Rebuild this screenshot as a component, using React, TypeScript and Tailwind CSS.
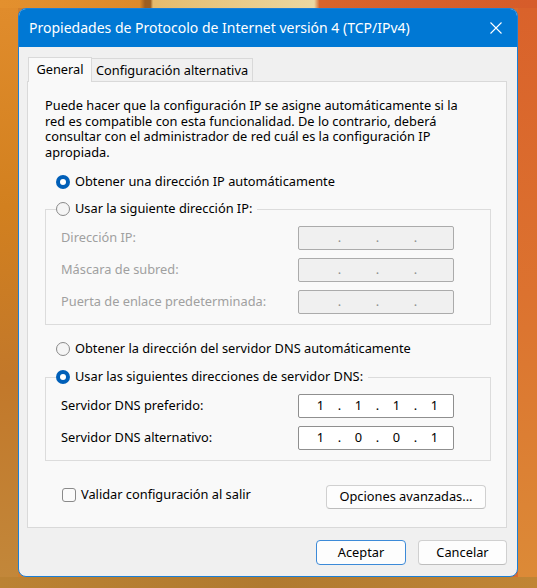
import React from "react";

type RadioProps = { checked?: boolean };

function Radio({ checked }: RadioProps) {
  if (checked) {
    return (
      <span className="flex h-[14px] w-[14px] shrink-0 items-center justify-center rounded-full bg-[#005fb8]">
        <span className="h-[6px] w-[6px] rounded-full bg-white" />
      </span>
    );
  }
  return <span className="h-[14px] w-[14px] shrink-0 rounded-full border border-[#8a8a8a] bg-[#f5f5f5]" />;
}

function IpBox({ value, disabled }: { value?: string[]; disabled?: boolean }) {
  const parts = value ?? ["", "", "", ""];
  return (
    <div
      className={
        disabled
          ? "flex h-[24px] w-[156px] items-center rounded-[2px] border border-[#ababab] bg-[#f0f0f0] pl-[12px] text-[#8f8f8f]"
          : "flex h-[24px] w-[156px] items-center rounded-[2px] border border-[#8f8f8f] bg-white pl-[12px] text-black"
      }
    >
      {parts.map((p, i) => (
        <React.Fragment key={i}>
          <span className="w-[19px] text-center">{p}</span>
          {i < 3 && <span className="w-[19px] text-center">.</span>}
        </React.Fragment>
      ))}
    </div>
  );
}

function FieldRow({ label, children, disabled }: { label: string; children: React.ReactNode; disabled?: boolean }) {
  return (
    <div className="flex h-[24px] items-center pl-[15px] pr-[36px]">
      <span className={disabled ? "flex-1 text-[#a0a0a0]" : "flex-1 text-black"}>{label}</span>
      {children}
    </div>
  );
}

export default function App() {
  return (
    <div className="flex h-[588px] w-[537px] flex-col overflow-hidden font-['Noto_Sans',sans-serif] text-[12.8px] leading-[15.5px] text-black">
      {/* wallpaper top strip */}
      <div className="h-[8px] shrink-0 bg-[linear-gradient(90deg,#e3902e_0%,#de8a2a_26%,#9c5e22_27%,#9c5e22_28%,#e6bb6c_28.5%,#ecd8a2_58.5%,#d8642c_59.5%,#d65c2a_100%)]" />

      <div className="flex h-[569px] shrink-0 bg-[linear-gradient(90deg,#d07e2c_0px,#d07e2c_30px,#d86a2c_500px,#d86a2c_537px)]">
        <div className="w-[18px] shrink-0 bg-[linear-gradient(180deg,#e08c2c_0%,#d2801f_35%,#c2782a_65%,#c2873a_100%)]" />

        {/* window */}
        <div className="flex h-[569px] w-[500px] shrink-0 flex-col overflow-hidden rounded-[8px] border border-[#1b7fd6] bg-[#f0f0f0]">
          <div className="flex h-[38px] shrink-0 items-center justify-between bg-[#0078d4] pl-[10px] pr-[15px] text-white">
            <span className="text-[14px]">Propiedades de Protocolo de Internet versión 4 (TCP/IPv4)</span>
            <svg width="12" height="12" viewBox="0 0 12 12" fill="none" stroke="white" strokeWidth="1.1">
              <path d="M0.5 0.5L11.5 11.5M11.5 0.5L0.5 11.5" />
            </svg>
          </div>

          <div className="flex flex-1 flex-col pl-[8px] pr-[10px] pt-[10px]">
            {/* tabs */}
            <div className="flex h-[24px] items-end pl-[1px]">
              <div className="relative z-10 -mb-px flex h-[25px] w-[64px] items-center justify-center border border-b-0 border-[#d9d9d9] bg-[#f9f9f9]">
                General
              </div>
              <div className="flex h-[23px] w-[161px] items-center justify-center border border-l-0 border-b-0 border-[#d9d9d9] bg-[#f0f0f0] pt-[2px]">
                Configuración alternativa
              </div>
            </div>

            {/* panel */}
            <div className="flex h-[447px] w-[480px] flex-col border border-[#d9d9d9] bg-[#f9f9f9] pl-[17px] pr-[15px] pt-[16px]">
              <p>
                Puede hacer que la configuración IP se asigne automáticamente si la
                <br />
                red es compatible con esta funcionalidad. De lo contrario, deberá
                <br />
                consultar con el administrador de red cuál es la configuración IP
                <br />
                apropiada.
              </p>

              <label className="mt-[13px] flex h-[18px] items-center gap-[5px] pl-[11px]">
                <Radio checked />
                <span>Obtener una dirección IP automáticamente</span>
              </label>

              <fieldset className="mt-[9px] h-[125px] border border-[#dcdcdc] pb-[9px] pt-[8px]">
                <legend className="ml-[10px] flex h-[18px] items-center gap-[5px] pl-0 pr-[5px]">
                  <Radio />
                  <span>Usar la siguiente dirección IP:</span>
                </legend>
                <div className="flex flex-col gap-[8px]">
                  <FieldRow label="Dirección IP:" disabled>
                    <IpBox disabled />
                  </FieldRow>
                  <FieldRow label="Máscara de subred:" disabled>
                    <IpBox disabled />
                  </FieldRow>
                  <FieldRow label="Puerta de enlace predeterminada:" disabled>
                    <IpBox disabled />
                  </FieldRow>
                </div>
              </fieldset>

              <label className="mt-[15px] flex h-[18px] items-center gap-[5px] pl-[11px]">
                <Radio />
                <span>Obtener la dirección del servidor DNS automáticamente</span>
              </label>

              <fieldset className="mt-[10px] h-[93px] border border-[#dcdcdc] pt-[8px]">
                <legend className="ml-[10px] flex h-[18px] items-center gap-[5px] pl-0 pr-[5px]">
                  <Radio checked />
                  <span>Usar las siguientes direcciones de servidor DNS:</span>
                </legend>
                <div className="flex flex-col gap-[8px]">
                  <FieldRow label="Servidor DNS preferido:">
                    <IpBox value={["1", "1", "1", "1"]} />
                  </FieldRow>
                  <FieldRow label="Servidor DNS alternativo:">
                    <IpBox value={["1", "0", "0", "1"]} />
                  </FieldRow>
                </div>
              </fieldset>

              <div className="mt-[24px] flex items-start justify-between pr-[5px]">
                <label className="mt-[1px] flex h-[18px] items-center gap-[5px] pl-[17px]">
                  <span className="h-[14px] w-[14px] rounded-[3px] border border-[#8a8a8a] bg-[#fbfbfb]" />
                  <span>Validar configuración al salir</span>
                </label>
                <button className="h-[24px] w-[160px] rounded-[4px] border border-[#d0d0d0] border-b-[#bdbdbd] bg-[#fdfdfd] text-black">
                  Opciones avanzadas...
                </button>
              </div>
            </div>

            {/* dialog buttons */}
            <div className="mt-[12px] flex justify-end gap-[12px]">
              <button className="h-[25px] w-[90px] rounded-[4px] border border-[#3c8ad8] bg-[#fdfdfd] text-black">
                Aceptar
              </button>
              <button className="h-[25px] w-[89px] rounded-[4px] border border-[#d0d0d0] border-b-[#bdbdbd] bg-[#fdfdfd] text-black">
                Cancelar
              </button>
            </div>
          </div>
        </div>

        <div className="flex-1 bg-[linear-gradient(180deg,#d9622b_0%,#dc722f_50%,#dc8a37_100%)]" />
      </div>

      <div className="flex-1 bg-[linear-gradient(90deg,#bb8233_0%,#b07a30_50%,#c08535_100%)]" />
    </div>
  );
}
